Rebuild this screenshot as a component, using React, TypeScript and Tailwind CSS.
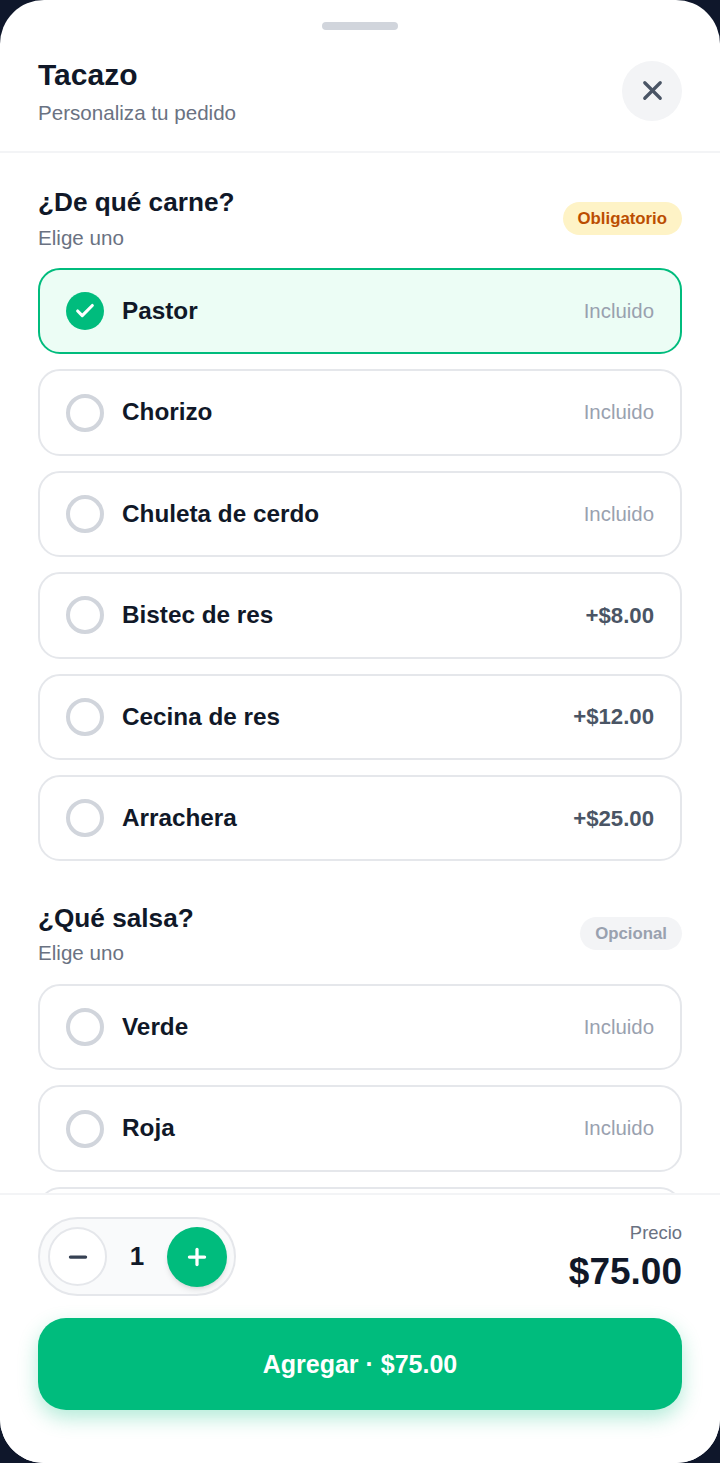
import { X, Check, Minus, Plus } from "lucide-react";

type Option = { name: string; price: string; selected?: boolean };

const carnes: Option[] = [
  { name: "Pastor", price: "Incluido", selected: true },
  { name: "Chorizo", price: "Incluido" },
  { name: "Chuleta de cerdo", price: "Incluido" },
  { name: "Bistec de res", price: "+$8.00" },
  { name: "Cecina de res", price: "+$12.00" },
  { name: "Arrachera", price: "+$25.00" },
];

const salsas: Option[] = [
  { name: "Verde", price: "Incluido" },
  { name: "Roja", price: "Incluido" },
];

function OptionRow({ option }: { option: Option }) {
  const included = option.price === "Incluido";
  return (
    <div
      className={
        option.selected
          ? "flex h-[86.4px] shrink-0 items-center rounded-[22px] border-2 border-emerald-500 bg-emerald-50 px-[26px]"
          : "flex h-[86.4px] shrink-0 items-center rounded-[22px] border-2 border-gray-200 bg-white px-[26px]"
      }
    >
      {option.selected ? (
        <span className="flex h-[38px] w-[38px] items-center justify-center rounded-full bg-emerald-500">
          <Check size={22} strokeWidth={3.4} className="text-white" />
        </span>
      ) : (
        <span className="h-[38px] w-[38px] rounded-full border-[4px] border-gray-300" />
      )}
      <span className="ml-[18px] text-[24.3px] font-bold text-gray-900">{option.name}</span>
      <span
        className={
          included
            ? "ml-auto text-[20.4px] text-gray-400"
            : "ml-auto text-[22.2px] font-bold text-gray-600"
        }
      >
        {option.price}
      </span>
    </div>
  );
}

export default function App() {
  return (
    <div className="h-[1463px] w-[720px] overflow-hidden bg-slate-900 font-['Liberation_Sans',Arial,sans-serif]">
      <div className="flex h-full flex-col overflow-hidden rounded-[44px] bg-white">
        <div className="flex shrink-0 justify-center pt-[22px]">
          <div className="h-[8px] w-[76px] rounded-full bg-gray-300" />
        </div>
        <header className="flex h-[123px] shrink-0 items-center justify-between border-b-2 border-gray-100 px-[38px]">
          <div className="pt-[2px]">
            <h1 className="text-[30px] leading-[38px] font-bold text-gray-900">Tacazo</h1>
            <p className="mt-[4px] text-[20.6px] leading-[30px] text-gray-500">Personaliza tu pedido</p>
          </div>
          <button className="flex h-[60px] w-[60px] items-center justify-center rounded-full bg-gray-100 text-gray-600">
            <X size={31} strokeWidth={2.5} />
          </button>
        </header>

        <div className="min-h-0 flex-1 overflow-hidden px-[38px] pt-[31px]">
          <section>
            <div className="flex items-start justify-between">
              <div>
                <h2 className="text-[26.2px] leading-[36px] font-bold text-gray-900">¿De qué carne?</h2>
                <p className="mt-[2px] text-[20.6px] leading-[32px] text-gray-500">Elige uno</p>
              </div>
              <span className="mt-[18px] rounded-full bg-amber-100 px-[15px] py-[7px] text-[16.8px] leading-[19px] font-bold text-amber-700">
                Obligatorio
              </span>
            </div>
            <div className="mt-[14px] flex flex-col gap-[15px]">
              {carnes.map((o) => (
                <OptionRow key={o.name} option={o} />
              ))}
            </div>
          </section>
          <section className="mt-[39px]">
            <div className="flex items-start justify-between">
              <div>
                <h2 className="text-[26.2px] leading-[36px] font-bold text-gray-900">¿Qué salsa?</h2>
                <p className="mt-[1px] text-[20.6px] leading-[32px] text-gray-500">Elige uno</p>
              </div>
              <span className="mt-[17px] rounded-full bg-gray-100 px-[15px] py-[7px] text-[16.8px] leading-[19px] font-bold text-gray-400">
                Opcional
              </span>
            </div>
            <div className="mt-[14.6px] flex flex-col gap-[15px]">
              {salsas.map((o) => (
                <OptionRow key={o.name} option={o} />
              ))}
              {/* next row is cut off by the footer, only its top edge shows */}
              <div className="h-[86.4px] shrink-0 rounded-[22px] border-2 border-gray-200 bg-white" />
            </div>
          </section>
        </div>

        <footer className="h-[270px] shrink-0 border-t-2 border-gray-100 bg-white px-[38px] pt-[22px]">
          <div className="flex items-center justify-between">
            <div className="flex h-[79px] w-[198px] items-center justify-between rounded-full border-2 border-gray-200 bg-gray-50 pr-[7px] pl-[8px]">
              <button className="flex h-[59px] w-[59px] items-center justify-center rounded-full border-2 border-gray-200 bg-white text-gray-700">
                <Minus size={26} strokeWidth={3} />
              </button>
              <span className="text-[26px] font-bold text-gray-900">1</span>
              <button className="flex h-[60px] w-[60px] items-center justify-center rounded-full bg-emerald-500 text-white shadow-md">
                <Plus size={26} strokeWidth={3} />
              </button>
            </div>
            <div className="pt-[2px] text-right">
              <p className="text-[18.4px] leading-[26px] text-gray-500">Precio</p>
              <p className="mt-[3px] text-[37px] leading-[46px] font-bold text-gray-900">$75.00</p>
            </div>
          </div>
          <button className="mt-[22px] h-[92px] w-full rounded-[28px] bg-emerald-500 pt-[2px] text-[25px] font-bold text-white shadow-[0_8px_20px_rgba(0,188,125,0.3)]">
            Agregar · $75.00
          </button>
        </footer>
      </div>
    </div>
  );
}
